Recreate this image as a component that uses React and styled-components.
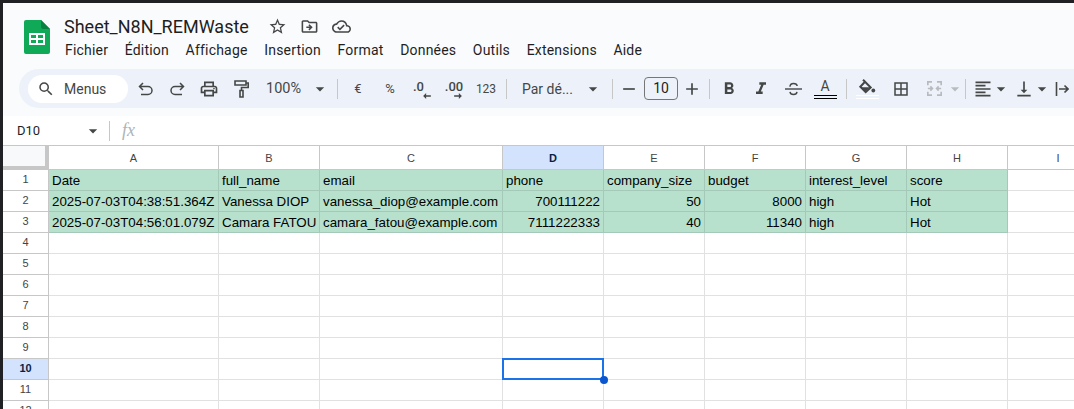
import React from "react";
import styled, { createGlobalStyle } from "styled-components";
import {
  MdOutlineStarBorder,
  MdOutlineDriveFileMove,
  MdOutlineCloudDone,
  MdOutlinePrint,
  MdSearch,
  MdArrowDropDown,
  MdAdd,
  MdRemove,
  MdFormatBold,
  MdFormatItalic,
  MdBorderAll,
  MdFormatAlignLeft,
  MdVerticalAlignBottom,
} from "react-icons/md";

const Global = createGlobalStyle`
  html, body { margin: 0; height: 100%; overflow: hidden; background: #202124; }
  * { box-sizing: border-box; }
`;

const Page = styled.div`
  height: 409px;
  padding: 3px 0 0 3px;
  overflow: hidden;
`;

const Window = styled.div`
  height: 406px;
  background: #f9fbfd;
  overflow: hidden;
  font-family: Roboto, "Noto Sans", sans-serif;
  color: #444746;
`;

const Header = styled.header`
  display: flex;
  height: 66px;
  padding: 12px 0 0 16px;
`;

const Logo = styled.svg`
  width: 28px;
  height: 34px;
  margin: 5px 0 0 4px;
  flex: none;
`;

const TitleBlock = styled.div`
  margin-left: 13px;
`;

const TitleRow = styled.div`
  display: flex;
  align-items: center;
  height: 23px;
`;

const Title = styled.div`
  font-size: 18px;
  color: #1f1f1f;
  width: 197px;
  white-space: nowrap;
`;

const TitleIcon = styled.span`
  display: flex;
  width: 32px;
  justify-content: center;
  color: #444746;
  font-size: 19px;
`;

const MenuBar = styled.nav`
  display: flex;
  margin-top: 4px;
  margin-left: 1px;
  font-size: 14px;
  letter-spacing: 0.2px;
  color: #1f1f1f;
  gap: 16.6px;
`;

const Toolbar = styled.div`
  display: flex;
  align-items: center;
  height: 39px;
  margin-left: 16px;
  padding-left: 9px;
  background: #edf2fa;
  border-radius: 20px 0 0 20px;
  width: 1100px;
`;

const SearchPill = styled.div`
  display: flex;
  align-items: center;
  width: 100px;
  height: 28px;
  margin-right: 1px;
  padding-left: 9px;
  background: #fff;
  border-radius: 14px;
  font-size: 14px;
  svg { font-size: 18px; margin-right: 9px; }
`;

const Tool = styled.div`
  display: flex;
  align-items: center;
  justify-content: center;
  flex: none;
  width: ${(p) => p.$w || 32}px;
  height: 28px;
  font-size: ${(p) => p.$size || 20}px;
  color: ${(p) => (p.$off ? "#b8bbbe" : "#444746")};
`;

const Caret = styled(MdArrowDropDown)`
  flex: none;
  font-size: 20px;
  margin-left: ${(p) => p.$ml || 0}px;
  color: ${(p) => (p.$off ? "#b8bbbe" : "#444746")};
`;

const Divider = styled.span`
  flex: none;
  width: 1px;
  height: 20px;
  margin-left: ${(p) => p.$l ?? 4}px;
  margin-right: ${(p) => p.$r ?? 4}px;
  background: #c7c7c7;
`;

const Dropdown = styled.div`
  display: flex;
  align-items: center;
  justify-content: space-between;
  flex: none;
  width: ${(p) => p.$w}px;
  padding-left: ${(p) => p.$pl}px;
  padding-right: ${(p) => p.$pr}px;
  font-size: ${(p) => p.$size || 14}px;
`;

const TextTool = styled(Tool)`
  font-size: ${(p) => p.$size || 12}px;
`;

const DecimalTool = styled(Tool)`
  position: relative;
  font-size: 13px;
  font-weight: 500;
  padding-bottom: 4px;
  padding-right: ${(p) => p.$shift}px;
  svg { position: absolute; bottom: 4px; left: 50%; margin-left: ${(p) => p.$arrow}px; }
`;

const SizeBox = styled.div`
  flex: none;
  width: 34px;
  height: 23px;
  margin: 0 -2px 0 -1px;
  border: 1px solid #747775;
  border-radius: 4px;
  font-size: 14px;
  line-height: 21px;
  text-align: center;
  color: #1f1f1f;
`;

const ColorTool = styled(Tool)`
  flex-direction: column;
  svg { display: block; }
`;

const ColorBar = styled.span`
  display: block;
  width: 23px;
  height: 4px;
  margin-top: 1px;
  border-top: 1px solid ${(p) => p.$color};
  border-bottom: 1px solid ${(p) => p.$color};
`;

const FormulaBar = styled.div`
  display: flex;
  align-items: center;
  height: 29px;
  margin-top: 8px;
  background: #fff;
`;

const NameBox = styled.div`
  display: flex;
  align-items: center;
  justify-content: space-between;
  width: 100px;
  padding: 0 0 0 14px;
  font-size: 13px;
  color: #1f1f1f;
`;

const Fx = styled.span`
  margin-left: 9px;
  font-family: "Liberation Serif", serif;
  font-style: italic;
  font-size: 18px;
  color: #b0b3b6;
`;

const Sheet = styled.div`
  display: grid;
  grid-template-columns: 46px 170px 101px 183px repeat(6, 101px);
  grid-template-rows: 24px;
  grid-auto-rows: 21px;
  background: #fff;
  border-top: 1px solid #c7c7c7;
  height: 264px;
  overflow: hidden;
  font-family: "Liberation Sans", Arial, sans-serif;
`;

const Corner = styled.div`
  background: #f8f9fa;
  border-right: 4px solid #c7c7c7;
  border-bottom: 4px solid #c7c7c7;
`;

const ColHead = styled.div`
  display: flex;
  align-items: center;
  justify-content: center;
  font-size: 11px;
  color: ${(p) => (p.$active ? "#0b1f44" : "#444")};
  font-weight: ${(p) => (p.$active ? 700 : 400)};
  background: ${(p) => (p.$active ? "#d3e3fd" : "#fff")};
  border-right: 1px solid #c7c7c7;
  border-bottom: 1px solid #c7c7c7;
`;

const RowHead = styled.div`
  display: flex;
  align-items: center;
  justify-content: center;
  font-size: 11px;
  color: ${(p) => (p.$active ? "#0b1f44" : "#444")};
  font-weight: ${(p) => (p.$active ? 700 : 400)};
  background: ${(p) => (p.$active ? "#d3e3fd" : "#fff")};
  border-right: 1px solid #c7c7c7;
  border-bottom: 1px solid #c7c7c7;
  padding-bottom: 2px;
`;

const Cell = styled.div`
  position: relative;
  padding: 2px 3px 0 3px;
  font-size: 13.33px;
  line-height: 17px;
  color: #000;
  white-space: nowrap;
  text-align: ${(p) => (p.$num ? "right" : "left")};
  background: ${(p) => (p.$filled ? "#b7e1cd" : "#fff")};
  border-right: 1px solid ${(p) => (p.$filled ? "#a5c9b8" : "#e1e1e1")};
  border-bottom: 1px solid ${(p) => (p.$filled ? "#a5c9b8" : "#e1e1e1")};
`;

const Selection = styled.div`
  position: absolute;
  z-index: 2;
  left: -1px;
  top: -1px;
  width: 102px;
  height: 22px;
  border: 2px solid #1a73e8;
  pointer-events: none;
`;

const Handle = styled.div`
  position: absolute;
  right: -6px;
  bottom: -6px;
  width: 8px;
  height: 8px;
  border-radius: 50%;
  background: #0b57d0;
`;

const columns = ["A", "B", "C", "D", "E", "F", "G", "H", "I"];

const rows = [
  ["Date", "full_name", "email", "phone", "company_size", "budget", "interest_level", "score"],
  ["2025-07-03T04:38:51.364Z", "Vanessa DIOP", "vanessa_diop@example.com", 700111222, 50, 8000, "high", "Hot"],
  ["2025-07-03T04:56:01.079Z", "Camara FATOU", "camara_fatou@example.com", 7111222333, 40, 11340, "high", "Hot"],
];

const menus = ["Fichier", "Édition", "Affichage", "Insertion", "Format", "Données", "Outils", "Extensions", "Aide"];

const SheetsLogo = () => (
  <Logo viewBox="0 0 28 34">
    <path d="M3 0h15l9 9v23a2 2 0 0 1-2 2H3a2 2 0 0 1-2-2V2a2 2 0 0 1 2-2z" fill="#0fa958" />
    <path d="M18 0l9 9h-7a2 2 0 0 1-2-2z" fill="#0b8043" />
    <path d="M6 13h16v12H6zm2 2v3h5v-3zm7 0v3h5v-3zM8 20v3h5v-3zm7 0v3h5v-3z" fill="#fff" fillRule="evenodd" />
  </Logo>
);

const UndoIcon = () => (
  <svg width="15" height="14" viewBox="0 0 15 14" fill="none" stroke="currentColor" strokeWidth="1.5">
    <path d="M5 1L1.500 4.500 5 8M1.500 4.500H10a3.500 3.500 0 0 1 0 8H3" />
  </svg>
);

const RedoIcon = () => (
  <svg width="15" height="14" viewBox="0 0 15 14" fill="none" stroke="currentColor" strokeWidth="1.5">
    <path d="M10 1l3.500 3.500L10 8M13.500 4.500H5a3.500 3.500 0 0 0 0 8h7" />
  </svg>
);

const RollerIcon = () => (
  <svg width="15" height="18" viewBox="0 0 15 18" fill="none" stroke="currentColor" strokeWidth="1.6">
    <path d="M1 1h11v4H1zM12 3h2.200v4.500H7.500v3" />
    <path d="M6 10.500h3v6.500H6z" />
  </svg>
);

const StrikeIcon = () => (
  <svg width="17" height="14" viewBox="0 0 17 14" fill="none" stroke="currentColor" strokeWidth="1.4">
    <path d="M0 7h17" />
    <path d="M5 4.800C5 2.800 6.500 1.500 8.500 1.500s3.500 1 3.700 2.500M5 9.800c.2 1.700 1.600 2.700 3.500 2.700s3.300-1 3.500-2.700" />
  </svg>
);

const FillIcon = () => (
  <svg width="18" height="15" viewBox="0 0 18 15" fill="none">
    <path d="M5 .8l2 2M7 2.800l5.700 5.700-5 4.700-5.400-5.400z" stroke="#444746" strokeWidth="2" />
    <path d="M3 8.200h9l-4.300 4.300z" fill="#444746" />
    <circle cx="15.300" cy="11.500" r="1.900" fill="#444746" />
  </svg>
);

const SmallArrow = ({ left }) => (
  <svg width="8" height="6" viewBox="0 0 9 7" fill="#444746">
    {left ? <path d="M0 3.500L3.500 0v2.500H9v2H3.500V7z" /> : <path d="M9 3.500L5.500 0v2.500H0v2h5.500V7z" />}
  </svg>
);

const MergeIcon = () => (
  <svg width="15" height="15" viewBox="0 0 18 18" fill="none" stroke="currentColor" strokeWidth="2">
    <path d="M1 5V1h5M12 1h5v4M1 13v4h5M12 17h5v-4" />
    <path d="M1 9h5M4 6.500L6.500 9 4 11.500M17 9h-5M14 6.500L11.500 9l2.500 2.500" />
  </svg>
);

const TextDirIcon = () => (
  <svg width="14" height="14" viewBox="0 0 14 14" fill="none" stroke="currentColor" strokeWidth="1.6">
    <path d="M1.500 0v14M4 7h9M9.500 3.500L13 7l-3.500 3.500" />
  </svg>
);

const App = () => {
  return (
    <Page>
      <Global />
      <Window>
        <Header>
          <SheetsLogo />
          <TitleBlock>
            <TitleRow>
              <Title>Sheet_N8N_REMWaste</Title>
              <TitleIcon><MdOutlineStarBorder /></TitleIcon>
              <TitleIcon><MdOutlineDriveFileMove /></TitleIcon>
              <TitleIcon><MdOutlineCloudDone /></TitleIcon>
            </TitleRow>
            <MenuBar>
              {menus.map((m) => (
                <span key={m}>{m}</span>
              ))}
            </MenuBar>
          </TitleBlock>
        </Header>

        <Toolbar>
          <SearchPill>
            <MdSearch />
            Menus
          </SearchPill>
          <Tool><UndoIcon /></Tool>
          <Tool><RedoIcon /></Tool>
          <Tool><MdOutlinePrint /></Tool>
          <Tool><RollerIcon /></Tool>
          <Dropdown $w={76} $pl={9} $pr={3} $size={14.5}>100%<Caret /></Dropdown>
          <Divider />
          <TextTool $size={13}>€</TextTool>
          <TextTool $size={13}>%</TextTool>
          <DecimalTool $arrow={1} $shift={7}>.0<SmallArrow left /></DecimalTool>
          <DecimalTool $arrow={0} $shift={0}>.00<SmallArrow /></DecimalTool>
          <TextTool>123</TextTool>
          <Divider />
          <Dropdown $w={97} $pl={11} $pr={5}>Par dé...<Caret /></Dropdown>
          <Divider $r={0} />
          <Tool><MdRemove /></Tool>
          <SizeBox>10</SizeBox>
          <Tool><MdAdd /></Tool>
          <Divider $l={1} $r={3} />
          <Tool $size={20}><MdFormatBold /></Tool>
          <Tool $size={20}><MdFormatItalic /></Tool>
          <Tool><StrikeIcon /></Tool>
          <ColorTool $size={14}>
            A
            <ColorBar $color="#000" />
          </ColorTool>
          <Divider $l={5} $r={4} />
          <ColorTool>
            <FillIcon />
            <ColorBar $color="#fff" />
          </ColorTool>
          <Tool $w={36} $size={18}><MdBorderAll /></Tool>
          <Tool $off $w={30}><MergeIcon /></Tool>
          <Caret $off $ml={-4} />
          <Divider $l={0} $r={3} />
          <Tool $w={28}><MdFormatAlignLeft /></Tool>
          <Caret $ml={-6} />
          <Tool $w={26}><MdVerticalAlignBottom /></Tool>
          <Caret $ml={-5} />
          <Tool $w={20}><TextDirIcon /></Tool>
        </Toolbar>

        <FormulaBar>
          <NameBox>D10<Caret /></NameBox>
          <Divider $l={6} $r={3} />
          <Fx>fx</Fx>
        </FormulaBar>

        <Sheet>
          <Corner />
          {columns.map((c) => (
            <ColHead key={c} $active={c === "D"}>{c}</ColHead>
          ))}
          {Array.from({ length: 12 }, (_, r) => (
            <React.Fragment key={r}>
              <RowHead $active={r === 9}>{r + 1}</RowHead>
              {columns.map((c, i) => {
                const value = rows[r]?.[i];
                return (
                  <Cell key={c} $filled={r < 3 && i < 8} $num={typeof value === "number"}>
                    {value}
                    {r === 9 && c === "D" && (
                      <Selection>
                        <Handle />
                      </Selection>
                    )}
                  </Cell>
                );
              })}
            </React.Fragment>
          ))}
        </Sheet>
      </Window>
    </Page>
  );
};

export default App;
